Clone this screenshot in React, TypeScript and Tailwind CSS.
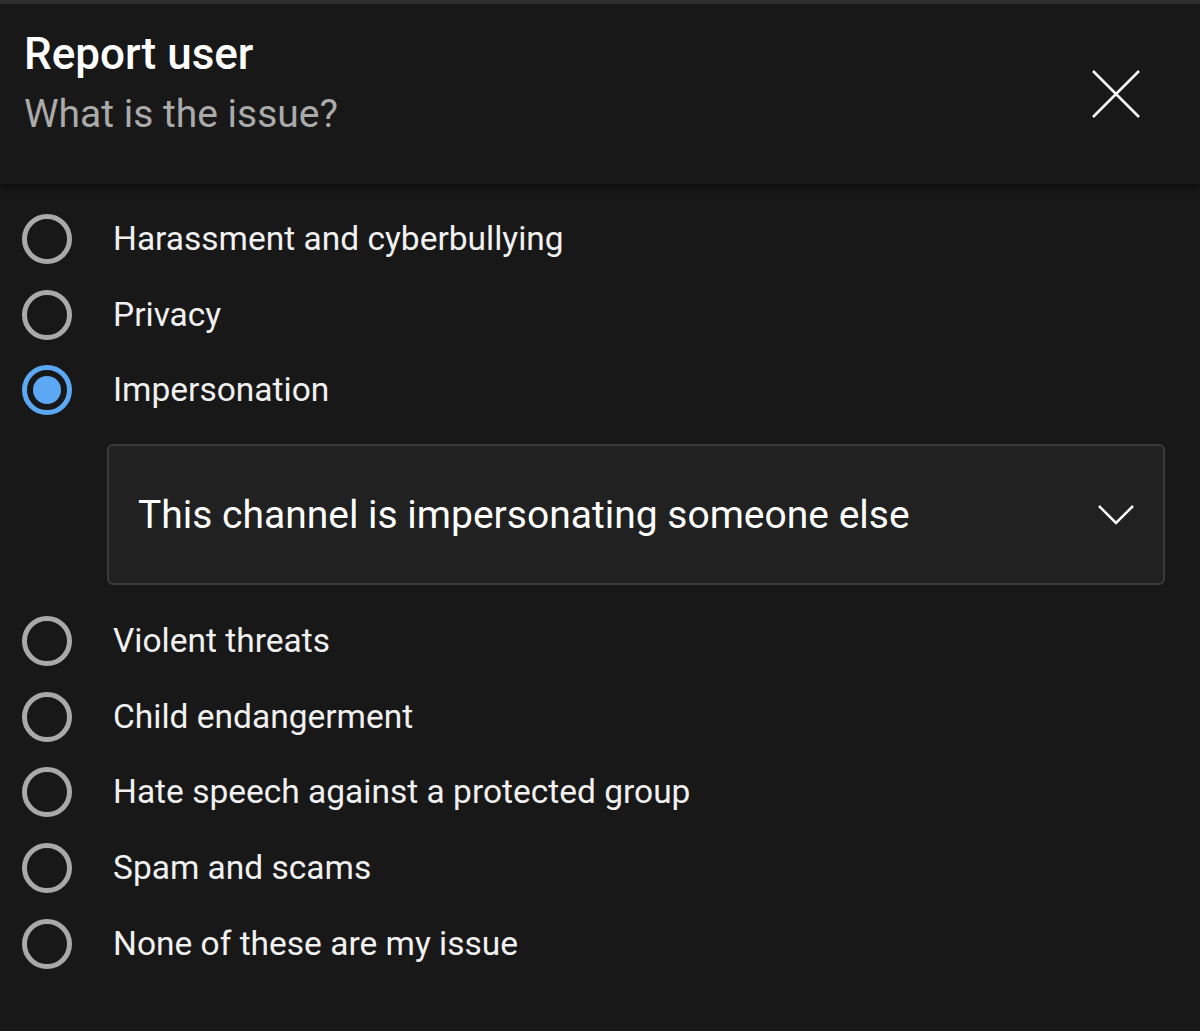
export default function App() {
  const options = [
    "Harassment and cyberbullying",
    "Privacy",
    "Impersonation",
    "Violent threats",
    "Child endangerment",
    "Hate speech against a protected group",
    "Spam and scams",
    "None of these are my issue",
  ];
  const selected = "Impersonation";

  return (
    <div
      className="flex min-h-[1031px] w-[1200px] flex-col bg-[#181818] text-[#f1f1f1]"
      style={{ fontFamily: "Roboto, 'Noto Sans', sans-serif" }}
    >
      <div className="h-[4px] bg-[#2e2e2e]" />
      {/* Header */}
      <div className="relative z-10 flex h-[180px] items-start justify-between bg-[#181818] pl-[24px] pr-[60px] shadow-[0_4px_6px_rgba(0,0,0,0.45)]">
        <div className="pt-[24px]">
          <h1 className="text-[44px] font-medium leading-[52px] text-white">Report user</h1>
          <p className="mt-[12px] text-[39px] leading-[44px] text-[#aaaaaa]">What is the issue?</p>
        </div>
        <button className="mt-[66px]">
          <svg width="48" height="48" viewBox="0 0 48 48" fill="none" stroke="#ffffff" strokeWidth="2.5">
            <path d="M1 1 L47 47 M47 1 L1 47" />
          </svg>
        </button>
      </div>

      {/* Options */}
      <div className="flex flex-col pt-[17px]">
        {options.map((label) => {
          const isSel = label === selected;
          return (
            <div key={label}>
              <label className="flex h-[75.7px] cursor-pointer items-center pl-[22px]">
                {isSel ? (
                  <span className="flex h-[50px] w-[50px] items-center justify-center rounded-full border-[5px] border-[#5ca8f5]">
                    <span className="h-[28px] w-[28px] rounded-full bg-[#5ca8f5]" />
                  </span>
                ) : (
                  <span className="h-[50px] w-[50px] rounded-full border-[5px] border-[#a9a9a9]" />
                )}
                <span className="ml-[41px] text-[33.5px] leading-[40px]">{label}</span>
              </label>
              {isSel && (
                <div className="pb-[18px] pl-[107px] pr-[35px] pt-[16px]">
                  <div className="flex h-[141px] items-center justify-between rounded-[6px] border-2 border-[#3a3a3a] bg-[#212121] pl-[29px] pr-[28px]">
                    <span className="text-[39px] leading-[46px] text-white">
                      This channel is impersonating someone else
                    </span>
                    <svg width="38" height="22" viewBox="0 0 38 22" fill="none" stroke="#ffffff" strokeWidth="2.5">
                      <path d="M2 2 L19 19 L36 2" />
                    </svg>
                  </div>
                </div>
              )}
            </div>
          );
        })}
      </div>
    </div>
  );
}
